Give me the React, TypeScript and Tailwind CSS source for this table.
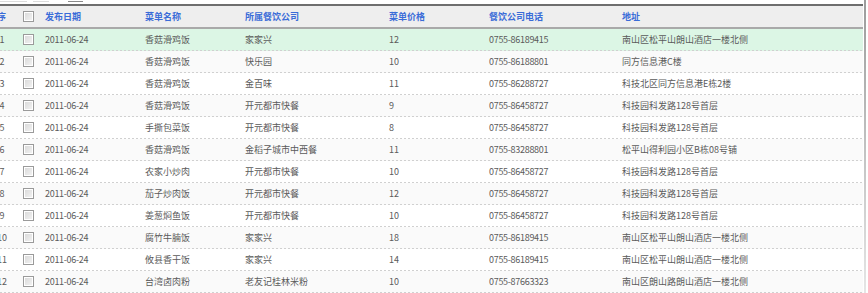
import React from "react";

const rows: [string, string, string, string, string][] = [
  ["香菇滑鸡饭", "家家兴", "12", "0755-86189415", "南山区松平山朗山酒店一楼北侧"],
  ["香菇滑鸡饭", "快乐园", "10", "0755-86188801", "同方信息港C楼"],
  ["香菇滑鸡饭", "金百味", "11", "0755-86288727", "科技北区同方信息港E栋2楼"],
  ["香菇滑鸡饭", "开元都市快餐", "9", "0755-86458727", "科技园科发路128号首层"],
  ["手撕包菜饭", "开元都市快餐", "8", "0755-86458727", "科技园科发路128号首层"],
  ["香菇滑鸡饭", "金稻子城市中西餐", "11", "0755-83288801", "松平山得利园小区B栋08号铺"],
  ["农家小炒肉", "开元都市快餐", "10", "0755-86458727", "科技园科发路128号首层"],
  ["茄子炒肉饭", "开元都市快餐", "12", "0755-86458727", "科技园科发路128号首层"],
  ["姜葱焖鱼饭", "开元都市快餐", "10", "0755-86458727", "科技园科发路128号首层"],
  ["腐竹牛腩饭", "家家兴", "18", "0755-86189415", "南山区松平山朗山酒店一楼北侧"],
  ["攸县香干饭", "家家兴", "14", "0755-86189415", "南山区松平山朗山酒店一楼北侧"],
  ["台湾卤肉粉", "老友记桂林米粉", "10", "0755-87663323", "南山区朗山路朗山酒店一楼北侧"],
];

function Box() {
  return (
    <div className="ml-[11px] h-[11px] w-[11px] border border-[#9a9a9a] bg-[linear-gradient(135deg,#d8d8d8,#f4f4f4)] shadow-[inset_0_0_0_1px_#ffffff]" />
  );
}

function Dash() {
  return (
    <div className="h-px w-full bg-[repeating-linear-gradient(to_right,#d0d0d0_0px,#d0d0d0_2px,transparent_2px,transparent_4px)]" />
  );
}

export default function App() {
  return (
    <div
      className="relative flex h-[293px] w-[868px] overflow-hidden bg-white"
      style={{ fontFamily: '"Noto Sans CJK SC", "Noto Sans", sans-serif' }}
    >
      <div className="flex w-[863px] flex-col overflow-hidden">
        <div className="flex h-[4px] items-start pt-px">
          <div className="h-px w-[27px] bg-[#dcdcdc]" />
          <div className="ml-[6px] h-px w-[16px] bg-[#dcdcdc]" />
          <div className="ml-[19px] h-px w-[15px] bg-[#8a8a8a]" />
        </div>
        <div className="h-[2px] bg-[#6e6e6e]" />
        <div className="ml-[-8px] flex h-[22px] w-[871px] items-center bg-[#eeeeee] text-[9px] font-bold text-[#3a6cd8]">
          <div className="w-[20px] pr-[6px] text-right">序</div>
          <div className="w-[28px]"><Box /></div>
          <div className="w-[100px] pl-[5px]">发布日期</div>
          <div className="w-[100px] pl-[5px]">菜单名称</div>
          <div className="w-[144px] pl-[5px]">所属餐饮公司</div>
          <div className="w-[100px] pl-[5px]">菜单价格</div>
          <div className="w-[133px] pl-[5px]">餐饮公司电话</div>
          <div className="flex-1 pl-[5px]">地址</div>
        </div>
        <div className="h-[2px] bg-[#a9a9a9]" />
        {rows.map((r, i) => {
          const bg = i === 0 ? "bg-[#dcf6e5]" : i % 2 === 1 ? "bg-[#fafafa]" : "bg-white";
          return (
            <div key={i} className={`flex flex-col ${bg}`}>
              <div className="ml-[-8px] flex h-[21px] w-[871px] items-center text-[9px] text-[#5a5a5a]">
                <div className="w-[20px] text-center">{i + 1}</div>
                <div className="w-[28px]"><Box /></div>
                <div className="w-[100px] pl-[5px] tracking-[-0.3px]">2011-06-24</div>
                <div className="w-[100px] pl-[5px]">{r[0]}</div>
                <div className="w-[144px] pl-[5px]">{r[1]}</div>
                <div className="w-[100px] pl-[5px]">{r[2]}</div>
                <div className="w-[133px] pl-[5px] tracking-[-0.3px]">{r[3]}</div>
                <div className="flex-1 pl-[5px]">{r[4]}</div>
              </div>
              <Dash />
            </div>
          );
        })}
      </div>
      <div className="ml-px w-[2px] bg-[linear-gradient(to_bottom,#9c9c9c,#e6e6e6)]" />
    </div>
  );
}
